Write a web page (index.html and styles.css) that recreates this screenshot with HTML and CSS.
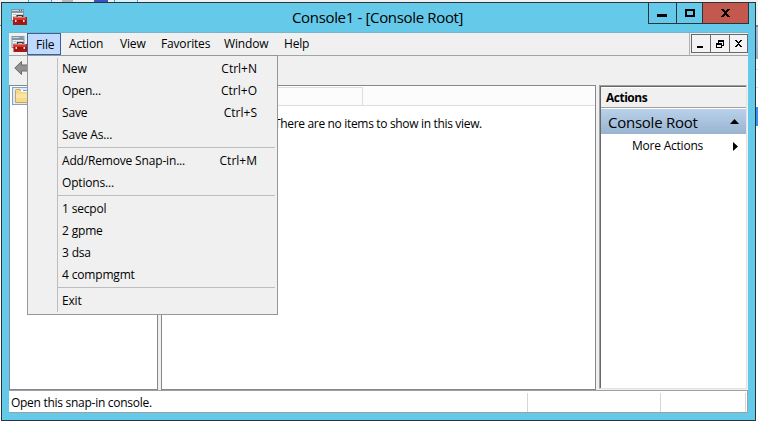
FILE: index.html
```
<!DOCTYPE html>
<html lang="en">
<head>
<meta charset="utf-8">
<title>Console1 - [Console Root]</title>
<link rel="stylesheet" href="styles.css">
</head>
<body>
<svg width="0" height="0" class="defs" aria-hidden="true">
  <symbol id="mmc" viewBox="0 0 16 16">
    <path fill="#8295a3" d="M0 0h13v12H0z"/>
    <path fill="#c9d5dd" d="M1 1h11v1H1z"/>
    <path fill="#f3f5f6" d="M1 4h11v7H1z"/>
    <path fill="#b3bec6" d="M2 5h3v1H2zM2 7h3v1H2zM2 9h2v1H2z"/>
    <path fill="#556772" d="M8 1h1v1H8zM10 1h1v1h-1z"/>
    <path fill="none" stroke="#33383d" stroke-width="1.3" d="M6 8V6.500h5.500V8"/>
    <path fill="#a61913" d="M2 8h14v8H2z"/>
    <path fill="#d9352b" d="M2 8h13v3H2z"/>
    <path fill="#ee7268" d="M3 8h11v1H3z"/>
    <path fill="#84130f" d="M2 11.500h13v.8H2z"/>
    <path fill="#e8e8e8" d="M4 11h1.500v2H4zM12 11h1.500v2H12z"/>
  </symbol>
</svg>
<div class="backdrop">
  <i class="tab"></i><i class="page"></i><i class="disk"></i><i class="tab"></i>
</div>
<div class="desk">
<div class="window">
  <header class="titlebar">
    <svg class="app-icon"><use href="#mmc"/></svg>
    <h1>Console1 - [Console Root]</h1>
    <div class="controls">
      <svg class="minimize" width="27" height="20" shape-rendering="crispEdges"><path d="M8 11h10v3H8z"/></svg>
      <svg class="maximize" width="25" height="20" shape-rendering="crispEdges"><path fill-rule="evenodd" d="M8 6h10v8H8zM10 8v4h6V8z"/></svg>
      <svg class="close" width="45" height="20" shape-rendering="crispEdges"><path d="M18 6h3v1h1v1h1V7h1V6h3v1h-1v1h-1v1h-1v2h1v1h1v1h1v1h-3v-1h-1v-1h-1v1h-1v1h-3v-1h1v-1h1v-1h1V9h-1V8h-1V7h-1z"/></svg>
    </div>
  </header>
  <div class="client">
    <nav class="menubar">
      <svg class="app-icon"><use href="#mmc"/></svg>
      <div class="menus">
        <span class="item file">File</span><span class="item action">Action</span><span class="item view">View</span><span class="item favorites">Favorites</span><span class="item win">Window</span><span class="item help">Help</span>
      </div>
      <div class="child-controls">
        <svg width="18" height="17" shape-rendering="crispEdges"><path d="M5 11h6v2H5z"/></svg>
        <svg width="18" height="17" shape-rendering="crispEdges"><path fill-rule="evenodd" d="M7 5h6v6h-2v2H5V8h2zM8 7v1h3v2h1V7zM6 10v2h4v-2z"/></svg>
        <svg width="17" height="17" shape-rendering="crispEdges"><path d="M5 5h2v1h1v1h1V6h1V5h2v1h-1v1h-1v1H9v1h1v1h1v1h1v1h-2v-1H9v-1H8v1H7v1H5v-1h1v-1h1V9h1V8H7V7H6V6H5z"/></svg>
      </div>
    </nav>
    <div class="toolbar">
      <svg width="18" height="18" viewBox="0 0 18 18"><path fill="#929292" stroke="#686868" d="M.8 8 7.500 1.500V5H17v6H7.500v3.500z"/></svg>
    </div>
    <main class="panes">
      <section class="tree">
        <div class="node"><svg width="16" height="16" viewBox="0 0 16 16"><path fill="#f7d98a" stroke="#d5a442" d="M.5 2.500q0-1 1-1H5l1.500 2H15v11H.5z"/><path fill="#fff" d="M6 2h8v2H6z"/><path fill="#5aa9df" d="M8 2h5v1H8z"/><path fill="#fae5a5" d="M1 6h14v4H1z"/></svg></div>
      </section>
      <section class="list">
        <div class="columns"><div class="column"></div></div>
        <p><span class="empty">There are no items to show in this view.</span></p>
      </section>
      <aside class="actions">
        <h2><span>Actions</span></h2>
        <div class="group"><span>Console Root</span><svg width="9" height="5"><path d="M0 5 4.500 0 9 5z"/></svg></div>
        <div class="more"><span>More Actions</span><svg width="5" height="9"><path d="M0 0 5 4.500 0 9z"/></svg></div>
      </aside>
    </main>
    <footer class="status"><div class="message"><span>Open this snap-in console.</span></div><div class="cell"></div><div class="cell small"></div></footer>
  </div>
</div>
<div class="behind"></div>
</div>
<div class="menu">
  <div class="row"><span>New</span><span class="key">Ctrl+N</span></div>
  <div class="row"><span>Open...</span><span class="key">Ctrl+O</span></div>
  <div class="row"><span>Save</span><span class="key">Ctrl+S</span></div>
  <div class="row"><span>Save As...</span></div>
  <hr>
  <div class="row"><span>Add/Remove Snap-in...</span><span class="key">Ctrl+M</span></div>
  <div class="row"><span>Options...</span></div>
  <hr>
  <div class="row"><span>1 secpol</span></div>
  <div class="row"><span>2 gpme</span></div>
  <div class="row"><span>3 dsa</span></div>
  <div class="row"><span>4 compmgmt</span></div>
  <hr>
  <div class="row"><span>Exit</span></div>
</div>
</body>
</html>
```
FILE: styles.css
```
* { box-sizing: border-box; }
body {
  margin: 0;
  width: 758px;
  height: 421px;
  overflow: hidden;
  background: #f0f0f0;
  color: #000;
  font: 12px/16px "Open Sans", "Noto Sans", sans-serif;
  letter-spacing: -0.17px;
}
svg { display: block; flex: none; }
.defs { position: absolute; }
h1, h2, p { margin: 0; font-weight: 400; }

.backdrop { display: flex; height: 2px; padding-left: 28px; }
.backdrop .tab { width: 24px; border: solid #35a6df; border-width: 0 1px; background: #d9effa; }
.backdrop .page { width: 11px; margin-left: 10px; background: #b8b8b8; }
.backdrop .disk { width: 14px; margin: 0 6px 0 21px; background: #3654c6; }

.desk { display: flex; height: 419px; padding-left: 1px; background: linear-gradient(#f0f0f0 23px, #808080 23px 24px, #fff 24px); }
.behind {
  flex: 1;
  background: linear-gradient(#f0f0f0 23px, #808080 23px 25px, #a9bfdf 25px, #98acd0 57px, #fff 57px 67px, #dedede 67px 68px, #fff 68px 85px, #dedede 85px 86px, #fff 86px 105px, #3390f8 105px 124px, #fff 124px);
}
.window {
  flex: none;
  width: 755px;
  height: 419px;
  padding: 0 7px 7px;
  border: 1px solid #2a3439;
  background: #65c9e9;
}
.titlebar { display: flex; height: 30px; margin: 0 -1px; border-bottom: 1px solid #78b4ca; }
.app-icon { width: 16px; height: 16px; }
.titlebar .app-icon { margin: 6px 0 0 3px; }
.titlebar h1 {
  flex: 1;
  padding: 3px 0 0 265px;
  font-size: 15px;
  line-height: 22px;
  letter-spacing: -0.34px;
  white-space: nowrap;
}
.controls { display: flex; height: 21px; border: solid #2a3439; border-width: 0 1px 1px; }
.controls svg + svg { border-left: 1px solid #2a3439; box-sizing: content-box; }
.controls .close { background: #c3584f; }

.client { height: 380px; background: #f0f0f0; }
.menubar { display: flex; height: 23px; border-bottom: 1px solid #a3a4a8; }
.menubar .app-icon { width: 17px; margin: 3px 0 0 2px; }
.menus { display: flex; flex: 1; margin-left: -1px; border-right: 1px solid #b0b1b5; }
.item { padding: 3px 0 0; }
.file { width: 34px; height: 22px; padding: 3px 0 0 8px; border: 1px solid #30649a; background: #bfd9ff; }
.action { width: 51px; padding-left: 8px; }
.view { width: 41px; padding-left: 8px; }
.favorites { width: 63px; padding-left: 8px; }
.win { width: 60px; padding-left: 8px; }
.help { padding-left: 8px; }
.child-controls { display: flex; height: 19px; margin: 1px 0 0 1px; border: 1px solid #696969; background: #f3f3f3; }
.child-controls svg + svg { border-left: 1px solid #696969; box-sizing: content-box; }

.toolbar { height: 29px; padding: 4px 0 0 5px; }
.panes { display: flex; height: 305px; }
.tree { width: 149px; border: 1px solid #828790; background: #fff; }
.node { width: 80px; height: 18px; margin: 1px 0 0 2px; padding-left: 2px; border: 1px solid #7da2ce; background: #dcebfd; }
.list { width: 435px; margin-left: 3px; border: 1px solid #828790; background: #fff; }
.columns { margin: 1px 0 0 1px; height: 19px; border-bottom: 1px solid #dedede; background: #fcfcfc; }
.column { width: 200px; height: 18px; border: solid #dedede; border-width: 1px 1px 0 0; }
.list p { padding: 10px 0 0 112px; letter-spacing: -0.33px; white-space: nowrap; }
.actions { width: 148px; margin-left: 3px; height: 304px; border: 1px solid; border-color: #a0a0a0 #e3e3e3 #e3e3e3 #a0a0a0; background: #fff; box-shadow: inset 1px 1px #696969; padding: 2px 0 0 1px; }
.actions h2 { height: 20px; padding: 2px 0 0 5px; border-bottom: 1px solid #a0a0a0; background: #f0f0f0; font-size: 12px; font-weight: 700; letter-spacing: -0.5px; }
.group { display: flex; justify-content: space-between; align-items: center; height: 25px; margin-top: 1px; padding: 0 7px; background: linear-gradient(#b9d1ea, #99b4d1); font-size: 15px; letter-spacing: -0.25px; }
.more { display: flex; justify-content: space-between; align-items: center; height: 24px; padding: 0 8px 0 31px; letter-spacing: -0.22px; }
.status { display: flex; height: 23px; border: solid #a0a0a0; border-width: 1px 1px 1px 0; background: #fff; padding: 2px 1px 0 0; }
.message { width: 519px; padding: 2px 0 0 2px; border-right: 1px solid #d7d7d7; letter-spacing: -0.28px; }
.cell { width: 133px; border-right: 1px solid #d7d7d7; }
.cell.small { flex: 1; }

.menu { position: absolute; left: 27px; top: 55px; width: 251px; height: 260px; padding: 2px; border: 1px solid #979797; background: linear-gradient(#bdbdbd, #bdbdbd) 29px 2px / 1px 254px no-repeat #f0f0f0; }
.row { display: flex; justify-content: space-between; height: 22px; padding: 3px 18px 0 32px; white-space: nowrap; }
.key { letter-spacing: 0; }
.menu hr { height: 1px; margin: 1px 0 2px 28px; border: 0; background: #bdbdbd; }
```
